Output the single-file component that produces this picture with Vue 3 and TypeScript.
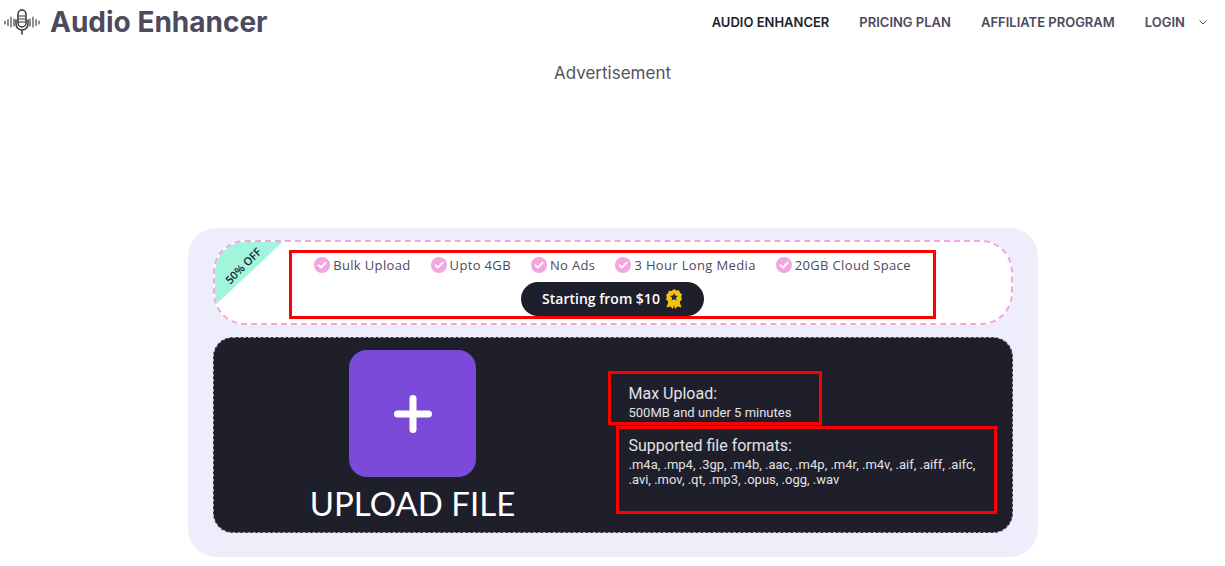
<script setup lang="ts">
const navItems = [
  { label: 'AUDIO ENHANCER', active: true },
  { label: 'PRICING PLAN', active: false },
  { label: 'AFFILIATE PROGRAM', active: false },
  { label: 'LOGIN', active: false },
]
const features = ['Bulk Upload', 'Upto 4GB', 'No Ads', '3 Hour Long Media', '20GB Cloud Space']
</script>

<template>
  <div class="page">
    <header class="header">
      <div class="brand">
        <svg class="logo" viewBox="0 0 36 28" width="36" height="28" fill="none" stroke="#333" stroke-linecap="round">
          <path d="M1 13v3M4 11.500v6M7 9v10M10 11v7M26 11v7M29 9v10M32 11.500v6M35 13v3" stroke-width="1.100" />
          <rect x="14" y="2" width="8" height="17" rx="4" stroke-width="1.500" />
          <path d="M15 8h6M15 11h6M15 14h6" stroke-width="1.200" />
          <path d="M12 12v4a6 6 0 0 0 12 0v-4M18 22v4" stroke-width="1.500" />
        </svg>
        <span class="brand-name">Audio Enhancer</span>
      </div>
      <nav class="nav">
        <a v-for="item in navItems" :key="item.label" class="nav-link" :class="{ active: item.active }">{{ item.label }}</a>
        <svg class="chevron" viewBox="0 0 8 5" width="8" height="5" fill="none" stroke="#55525f" stroke-width="1">
          <path d="M.5.500 4 4 7.500.5" />
        </svg>
      </nav>
    </header>

    <div class="ad">Advertisement</div>

    <main class="card">
      <section class="promo">
        <div class="ribbon"><span>50% OFF</span></div>
        <div class="offer">
          <ul class="features">
            <li v-for="feature in features" :key="feature" class="feature">
              <svg viewBox="0 0 16 16" width="16" height="16">
                <circle cx="8" cy="8" r="8" fill="#f3a5e0" />
                <path d="M4.500 8.200 7 10.600 11.500 5.800" fill="none" stroke="#fff" stroke-width="2" stroke-linecap="round" stroke-linejoin="round" />
              </svg>
              <span>{{ feature }}</span>
            </li>
          </ul>
          <button class="price">
            Starting from $10
            <svg viewBox="0 0 18 22" width="18" height="22">
              <path d="M4 12 1.500 19.500 5.500 18.500 8 21l1-4 1 4 2.500-2.500 4 1L14 12z" fill="#f2c40f" />
              <path d="M9 1l2.300 1.400 2.700-.2 1 2.500 2 1.800-.8 2.500.8 2.500-2 1.800-1 2.500-2.700-.2L9 17l-2.300-1.400-2.700.2-1-2.500-2-1.800.8-2.500L1 7l2-1.800 1-2.500 2.700.2z" fill="#f2c40f" />
              <path d="M9 5l1.200 2.600 2.800.3-2.100 1.900.6 2.800L9 11.200l-2.500 1.400.6-2.800L5 7.900l2.800-.3z" fill="#2a2a35" />
            </svg>
          </button>
        </div>
      </section>

      <section class="upload">
        <div class="upload-left">
          <div class="tile">
            <svg viewBox="0 0 38 38" width="38" height="38" fill="none" stroke="#fff" stroke-width="7" stroke-linecap="round">
              <path d="M19 3.500v31M3.500 19h31" />
            </svg>
          </div>
          <div class="upload-label">UPLOAD FILE</div>
        </div>
        <div class="upload-right">
          <div class="info info-max">
            <div class="info-title">Max Upload:</div>
            <div class="info-text">500MB and under 5 minutes</div>
          </div>
          <div class="info info-formats">
            <div class="info-title">Supported file formats:</div>
            <div class="info-text">.m4a, .mp4, .3gp, .m4b, .aac, .m4p, .m4r, .m4v, .aif, .aiff, .aifc,<br />.avi, .mov, .qt, .mp3, .opus, .ogg, .wav</div>
          </div>
        </div>
      </section>
    </main>
  </div>
</template>

<style>
html, body { margin: 0; background: #fff; }
</style>

<style scoped>
.page { width: 1225px; height: 566px; overflow: hidden; font-family: "Inter", sans-serif; }
.header { height: 44px; display: flex; justify-content: space-between; align-items: center; padding-left: 4px; padding-right: 18px; }
.brand { display: flex; align-items: center; gap: 10px; }
.logo { display: block; }
.brand-name { font: 700 28px/1 "Inter", sans-serif; color: #4d4a5e; }
.nav { display: flex; align-items: center; }
.nav-link { font: 600 13px/1 "Inter", sans-serif; color: #4d4a5e; margin-left: 30px; }
.nav-link.active { color: #1f1f2b; }
.chevron { margin-left: 14px; }
.ad { margin-top: 19px; height: 20px; text-align: center; font: 400 17px/20px "Inter", sans-serif; color: #55525f; }
.card { box-sizing: border-box; width: 850px; height: 329px; margin: 145px auto 0; padding: 12px 25px 24px; background: #eeedfb; border-radius: 28px; display: flex; flex-direction: column; gap: 12px; }
.promo { position: relative; box-sizing: border-box; height: 85px; background: #fff; border: 2px dashed #f3a5e0; border-radius: 32px; overflow: hidden; display: flex; justify-content: center; padding-top: 8px; }
.ribbon { position: absolute; left: 0; top: 0; width: 68px; height: 64px; background: #a0f5dc; clip-path: polygon(0 0, 100% 0, 0 100%); }
.ribbon span { position: absolute; left: -2px; top: 18px; width: 60px; text-align: center; font: 600 11px/1 "Open Sans", sans-serif; color: #1f1f2b; transform: rotate(-45deg); white-space: nowrap; }
.offer { box-sizing: border-box; width: 647px; height: 69px; border: 3px solid #f00; display: flex; flex-direction: column; align-items: center; padding-top: 4px; }
.features { list-style: none; margin: 0; padding: 0; display: flex; gap: 20px; }
.feature { display: flex; align-items: center; gap: 3px; height: 16px; font: 400 13px/16px "Open Sans", sans-serif; letter-spacing: .35px; color: #4d4a5e; }
.feature svg { flex: none; }
.price { box-sizing: border-box; width: 183px; height: 35px; margin-top: 9px; border: 0; border-radius: 18px; background: #1f1f2b; color: #fff; font: 600 14px/1 "Open Sans", sans-serif; display: flex; align-items: center; justify-content: center; gap: 5px; padding: 0; }
.upload { box-sizing: border-box; height: 196px; display: flex; background: #1f1f2b; border: 1px dashed #a5a5ad; border-radius: 20px; }
.upload-left { width: 398px; display: flex; flex-direction: column; align-items: center; padding-top: 12px; }
.tile { width: 127px; height: 127px; background: #7c4ad9; border-radius: 18px; display: flex; align-items: center; justify-content: center; }
.upload-label { margin-top: 8px; font: 400 33px/36px "Lato", sans-serif; color: #fff; white-space: nowrap; }
.upload-right { padding-top: 33px; color: #e2e2e6; font-family: "Roboto", sans-serif; }
.info { box-sizing: border-box; border: 3px solid #f00; }
.info-max { width: 214px; height: 54px; margin-left: -4px; padding: 10px 0 0 18px; }
.info-formats { width: 381px; height: 88px; margin: 1px 0 0 4px; padding: 7px 0 0 10px; }
.info-title { font-size: 16px; line-height: 20px; }
.info-text { font-size: 13px; line-height: 15px; margin-top: 1px; white-space: nowrap; }
</style>
